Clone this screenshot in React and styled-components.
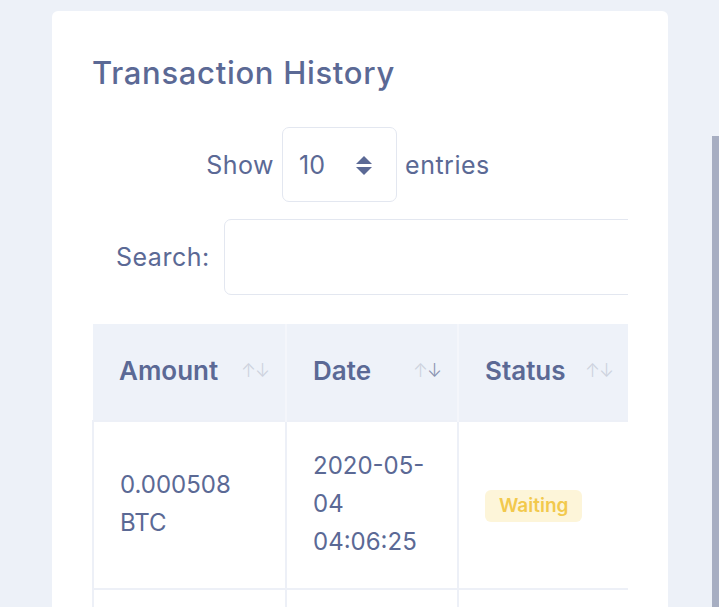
import React from 'react'
import styled, { createGlobalStyle } from 'styled-components'

const GlobalStyle = createGlobalStyle`
  body{
    margin: 0;
    background: #edf1f8;
    font-family: "Inter", "Open Sans", sans-serif;
    overflow: hidden;
  }
`

const Page = styled.div`
  position: relative;
  height: 607px;
  padding: 11px 0 0 52px;
  box-sizing: border-box;
`

const Thumb = styled.div`
  position: absolute;
  right: 0;
  top: 136px;
  bottom: 0;
  width: 7px;
  background: #a7aec2;
`

const Card = styled.div`
  width: 616px;
  box-sizing: border-box;
  background: #fff;
  border-radius: 6px;
  padding: 43px 40px 40px;
  color: #5b6995;
`

const Title = styled.h4`
  margin: 0 0 35px;
  font-size: 31px;
  line-height: 38px;
  font-weight: 500;
  letter-spacing: 0.7px;
  color: #5b6995;
`

const Wrapper = styled.div`
  overflow: hidden;
`

const LengthRow = styled.div`
  display: flex;
  align-items: center;
  justify-content: center;
  gap: 8px;
  padding-right: 24px;
  font-size: 25px;
  letter-spacing: 0.5px;
`

const Select = styled.div`
  width: 115px;
  height: 75px;
  box-sizing: border-box;
  border: 1px solid #e3e7f0;
  border-radius: 7px;
  display: flex;
  align-items: center;
  justify-content: space-between;
  padding: 0 23px 0 16px;
  letter-spacing: 0;
`

const FilterRow = styled.div`
  display: flex;
  align-items: center;
  gap: 14px;
  padding-left: 24px;
  margin-top: 17px;
  font-size: 25px;
  letter-spacing: 0.5px;
`

const SearchInput = styled.div`
  flex: none;
  width: 460px;
  height: 76px;
  box-sizing: border-box;
  border: 1px solid #e3e7f0;
  border-radius: 7px;
`

const Table = styled.table`
  margin-top: 29px;
  width: 536px;
  border-collapse: collapse;
  table-layout: fixed;
`

const Th = styled.th`
  box-sizing: border-box;
  width: ${p => p.$w}px;
  background: #eef2f9;
  border-right: 2px solid #f4f6fb;
  padding: 28px 26px 30px;
  line-height: 38px;
  font-size: 26px;
  font-weight: 600;
  text-align: left;
  color: #5b6995;
  &:last-child{ border-right: none; }
`

const HeadInner = styled.div`
  display: flex;
  align-items: center;
  justify-content: space-between;
`

const Sort = styled.span`
  font-size: 18px;
  font-weight: 300;
  letter-spacing: -1px;
  margin-right: -10px;
  color: #cdd2de;
  span{ color: ${p => (p.$desc ? '#8a94b2' : '#cdd2de')}; }
`

const Td = styled.td`
  border: 2px solid #edf0f7;
  padding: 25px 26px 27px;
  font-size: 24px;
  line-height: 38px;
  vertical-align: middle;
  color: #5b6995;
`

const Badge = styled.span`
  display: inline-block;
  background: #fdf5d9;
  color: #f2c94c;
  font-size: 19px;
  font-weight: 600;
  line-height: 32px;
  padding: 0 14px;
  border-radius: 6px;
`

const Caret = () => (
  <svg width="18" height="24" viewBox="0 0 18 24">
    <path d="M9 3 L17 11 L1 11 Z" fill="#5b6995" />
    <path d="M1 14 L17 14 L9 22 Z" fill="#5b6995" />
  </svg>
)

const rows = [
  { amount: '0.000508 BTC', date: '2020-05-04 04:06:25', status: 'Waiting' },
  { amount: '0.000508 BTC', date: '2020-05-04 04:06:25', status: 'Waiting' },
]

const App = () => {
  return (
    <Page>
      <GlobalStyle />
      <Card>
        <Title>Transaction History</Title>
        <Wrapper>
          <LengthRow>
            Show
            <Select>
              <span>10</span>
              <Caret />
            </Select>
            entries
          </LengthRow>
          <FilterRow>
            Search:
            <SearchInput />
          </FilterRow>
          <Table>
            <thead>
              <tr>
                <Th $w={193}><HeadInner>Amount<Sort>↑<span>↓</span></Sort></HeadInner></Th>
                <Th $w={172}><HeadInner>Date<Sort $desc>↑<span>↓</span></Sort></HeadInner></Th>
                <Th $w={171}><HeadInner>Status<Sort>↑<span>↓</span></Sort></HeadInner></Th>
              </tr>
            </thead>
            <tbody>
              {rows.map((r, i) => (
                <tr key={i}>
                  <Td>{r.amount}</Td>
                  <Td>{r.date}</Td>
                  <Td><Badge>{r.status}</Badge></Td>
                </tr>
              ))}
            </tbody>
          </Table>
        </Wrapper>
      </Card>
      <Thumb />
    </Page>
  )
}

export default App
